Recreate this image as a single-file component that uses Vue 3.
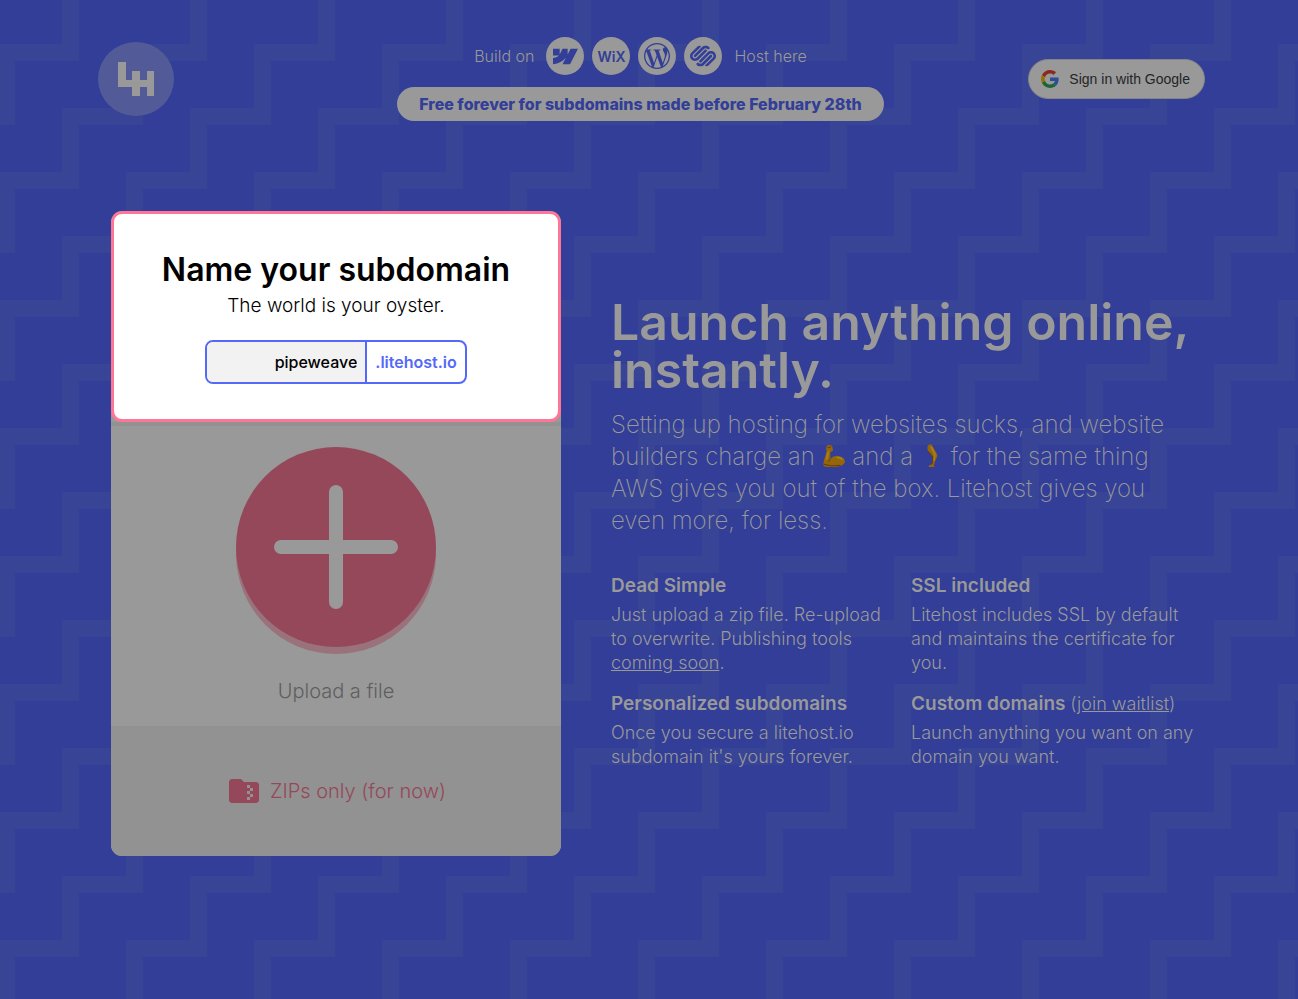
<script setup>
import { ref } from 'vue'

const subdomain = ref('pipeweave')

const builders = [
  {
    name: 'Webflow',
    size: 25,
    path: 'm24 4.515-7.658 14.97H9.149l3.205-6.204h-.144C9.566 16.713 5.621 18.973 0 19.485v-6.118s3.596-.213 5.71-2.435H0V4.515h6.417v5.278l.144-.001 2.622-5.277h4.854v5.244h.144l2.72-5.244H24Z',
  },
  { name: 'Wix', text: 'WiX' },
  {
    name: 'WordPress',
    size: 26,
    path: 'M21.469 6.825c.84 1.537 1.318 3.3 1.318 5.175 0 3.979-2.156 7.456-5.363 9.325l3.295-9.527c.615-1.54.82-2.771.82-3.864 0-.405-.026-.78-.07-1.11m-7.981.105c.647-.03 1.232-.105 1.232-.105.582-.075.514-.93-.067-.899 0 0-1.755.135-2.88.135-1.064 0-2.85-.15-2.85-.15-.585-.03-.661.855-.075.885 0 0 .54.061 1.125.09l1.68 4.605-2.37 7.08L5.354 6.9c.649-.03 1.234-.1 1.234-.1.585-.075.516-.93-.065-.896 0 0-1.746.138-2.874.138-.2 0-.438-.008-.69-.015C4.911 3.15 8.235 1.215 12 1.215c2.809 0 5.365 1.072 7.286 2.833-.046-.003-.091-.009-.141-.009-1.06 0-1.812.923-1.812 1.914 0 .89.513 1.643 1.06 2.531.411.72.89 1.643.89 2.977 0 .915-.354 1.994-.821 3.479l-1.075 3.585-3.9-11.61.001.014zM12 22.784c-1.059 0-2.081-.153-3.048-.437l3.237-9.406 3.315 9.087c.024.053.05.101.078.149-1.12.393-2.325.609-3.582.609M1.211 12c0-1.564.336-3.05.935-4.39L7.29 21.709C3.694 19.96 1.212 16.271 1.211 12M12 0C5.385 0 0 5.385 0 12s5.385 12 12 12 12-5.385 12-12S18.615 0 12 0',
  },
  {
    name: 'Squarespace',
    size: 26,
    path: 'M22.655 8.719c-1.802-1.801-4.726-1.801-6.564 0l-7.351 7.35c-.45.45-.45 1.2 0 1.65.45.449 1.2.449 1.65 0l7.351-7.351c.899-.899 2.362-.899 3.264 0 .9.9.9 2.364 0 3.264l-7.239 7.239c.9.899 2.362.899 3.263 0l5.589-5.589c1.836-1.838 1.836-4.763.037-6.563zm-2.475 2.437c-.451-.45-1.201-.45-1.65 0l-7.354 7.389c-.9.899-2.361.899-3.262 0-.45-.45-1.2-.45-1.65 0s-.45 1.2 0 1.649c1.801 1.801 4.726 1.801 6.564 0l7.351-7.35c.449-.487.449-1.239.001-1.688zm-2.439-7.35c-1.801-1.801-4.726-1.801-6.564 0l-7.351 7.351c-.45.449-.45 1.199 0 1.649s1.2.45 1.65 0l7.395-7.351c.9-.899 2.371-.899 3.27 0 .451.45 1.201.45 1.65 0 .421-.487.421-1.199-.05-1.649zm-2.475 2.475c-.45-.449-1.2-.449-1.65 0l-7.351 7.35c-.899.9-2.362.9-3.263 0-.9-.898-.9-2.361 0-3.262l7.239-7.239c-.9-.9-2.362-.9-3.263 0L1.39 8.719c-1.8 1.8-1.8 4.725 0 6.563 1.801 1.801 4.725 1.801 6.564 0l7.35-7.351c.412-.487.412-1.237-.038-1.65z',
  },
]
</script>

<template>
  <div class="page">
    <svg class="backdrop" aria-hidden="true">
      <defs>
        <pattern id="stairs" x="-2" y="44" width="128" height="128" patternUnits="userSpaceOnUse">
          <path d="M0 0H81V17H17V81H0ZM64 64H128V81H81V128H64Z" />
        </pattern>
      </defs>
      <rect width="100%" height="100%" fill="url(#stairs)" />
    </svg>

    <header class="header">
      <a class="logo" href="#" aria-label="Litehost">
        <svg width="76" height="74" viewBox="0 0 76 74">
          <ellipse cx="38" cy="37" rx="38" ry="37" fill="#525b98" />
          <path d="M20 20h8v18h6v-9h8v9h7v-9h7v25h-7v-9h-7v9h-8v-9H20z" fill="#999" />
        </svg>
      </a>

      <div class="pitch">
        <div class="builders">
          <span>Build on</span>
          <ul class="badges">
            <li v-for="b in builders" :key="b.name" class="badge" :aria-label="b.name">
              <svg v-if="b.path" :width="b.size" :height="b.size" viewBox="0 0 24 24"><path :d="b.path" /></svg>
              <span v-else>{{ b.text }}</span>
            </li>
          </ul>
          <span>Host here</span>
        </div>
        <p class="promo">Free forever for subdomains made before February 28th</p>
      </div>

      <button class="google" type="button">
        <svg width="18" height="18" viewBox="0 0 48 48" aria-hidden="true">
          <path fill="#8d2820" d="M24 9.5c3.54 0 6.71 1.22 9.21 3.6l6.85-6.85C35.9 2.38 30.47 0 24 0 14.62 0 6.51 5.38 2.56 13.22l7.98 6.19C12.43 13.72 17.74 9.5 24 9.5z" />
          <path fill="#285092" d="M46.98 24.55c0-1.57-.15-3.09-.38-4.55H24v9.02h12.94c-.58 2.96-2.26 5.48-4.78 7.18l7.73 6c4.51-4.18 7.09-10.36 7.09-17.65z" />
          <path fill="#977103" d="M10.53 28.59c-.48-1.45-.76-2.99-.76-4.59s.27-3.14.76-4.59l-7.98-6.19C.92 16.46 0 20.12 0 24c0 3.88.92 7.54 2.56 10.78l7.97-6.19z" />
          <path fill="#1f6532" d="M24 48c6.48 0 11.93-2.13 15.89-5.81l-7.73-6c-2.15 1.45-4.92 2.3-8.16 2.3-6.26 0-11.57-4.22-13.47-9.91l-7.98 6.19C6.51 42.62 14.62 48 24 48z" />
        </svg>
        <span>Sign in with Google</span>
      </button>
    </header>

    <main class="main">
      <section class="card">
        <form class="naming" @submit.prevent>
          <h2>Name your subdomain</h2>
          <label class="tagline" for="subdomain">The world is your oyster.</label>
          <div class="field">
            <input id="subdomain" v-model="subdomain" type="text" spellcheck="false" />
            <span class="suffix">.litehost.io</span>
          </div>
        </form>
        <div class="upload">
          <button id="upload" class="plus" type="button" aria-labelledby="upload-label">
            <svg width="124" height="124" viewBox="0 0 124 124" aria-hidden="true">
              <path d="M62 7v110M7 62h110" stroke="#999" stroke-width="14" stroke-linecap="round" />
            </svg>
          </button>
          <label id="upload-label" for="upload">Upload a file</label>
        </div>
        <footer class="formats">
          <svg width="36" height="36" viewBox="0 0 24 24" aria-hidden="true">
            <path d="M20 6h-8l-2-2H4c-1.1 0-2 .9-2 2v12c0 1.1.9 2 2 2h16c1.1 0 2-.9 2-2V8c0-1.1-.9-2-2-2zm-2 6h-2v2h2v2h-2v2h-2v-2h2v-2h-2v-2h2v-2h-2V8h2v2h2v2z" />
          </svg>
          <span>ZIPs only (for now)</span>
        </footer>
      </section>

      <section class="copy">
        <h1>Launch anything online, instantly.</h1>
        <p class="lead">
          Setting up hosting for websites sucks, and website builders charge an
          <svg class="emoji" width="24" height="24" viewBox="0 0 26 26" role="img" aria-label="arm">
            <path d="M5 2Q8 0 11 2L12 7 9 9 9 16Q13 12 18 13 24 14 25 19 24 23 19 24 10 26 2 24 1 22 2 18L5 8Q4 5 5 2Z" fill="#94660c" />
            <path d="M2 22Q10 25 20 23M9 16l-2 3M6 4l4-1" stroke="#633808" fill="none" />
            <path d="M7 8L5 17M16 15Q20 14 22 17" stroke="#a9801c" stroke-width="2" fill="none" />
          </svg>
          and a
          <svg class="emoji" width="24" height="24" viewBox="0 0 26 26" role="img" aria-label="leg">
            <path d="M9 1Q13-1 14 3L18 10Q20 13 17 17L15 23 16 25 9 25 10 23 13 22 14 14 9 8Q7 4 9 1Z" fill="#94660c" />
            <path d="M12 3L16 11 15 18" stroke="#a9801c" stroke-width="2" fill="none" />
            <path d="M9 8L14 14 13 22" stroke="#633808" fill="none" />
          </svg>
          for the same thing AWS gives you out of the box. Litehost gives you even more, for less.
        </p>
        <div class="features">
          <article>
            <h3>Dead Simple</h3>
            <p>Just upload a zip file. Re-upload to overwrite. Publishing tools <a href="#">coming soon</a>.</p>
          </article>
          <article>
            <h3>SSL included</h3>
            <p>Litehost includes SSL by default and maintains the certificate for you.</p>
          </article>
          <article>
            <h3>Personalized subdomains</h3>
            <p>Once you secure a litehost.io subdomain it's yours forever.</p>
          </article>
          <article>
            <h3>Custom domains <span>(<a href="#">join waitlist</a>)</span></h3>
            <p>Launch anything you want on any domain you want.</p>
          </article>
        </div>
      </section>
    </main>
  </div>
</template>

<style>
body {
  margin: 0;
  background: #323e97;
}
</style>

<style scoped>
.page {
  position: relative;
  box-sizing: border-box;
  min-height: 100vh;
  padding: 37px 0 80px;
  color: #999;
  font-family: Inter, "Open Sans", sans-serif;
  font-weight: 300;
}
.backdrop {
  position: absolute;
  inset: 0;
  width: 100%;
  height: 100%;
  fill: #384495;
}
h1, h2, h3, p, ul {
  margin: 0;
  padding: 0;
}
a {
  color: inherit;
}
.header {
  position: relative;
  display: grid;
  grid-template-columns: 1fr auto 1fr;
  align-items: center;
  padding: 0 93px 0 76px;
}
.logo {
  justify-self: start;
  margin-left: 22px;
}
.logo svg {
  display: block;
}
.pitch {
  display: flex;
  flex-direction: column;
  align-items: center;
  gap: 12px;
}
.builders {
  display: flex;
  align-items: center;
  gap: 12px;
  font-size: 16px;
}
.badges {
  display: flex;
  gap: 8px;
  list-style: none;
}
.badge {
  display: flex;
  align-items: center;
  justify-content: center;
  width: 38px;
  height: 38px;
  border-radius: 50%;
  background: #999;
  color: #323e97;
  fill: #323e97;
  font-size: 14px;
  font-weight: 600;
}
.promo {
  padding: 0 22px;
  border-radius: 17px;
  background: #999;
  color: #323e97;
  font-size: 16px;
  font-weight: 800;
  line-height: 34px;
  white-space: nowrap;
}
.google {
  justify-self: end;
  display: flex;
  align-items: center;
  gap: 10px;
  height: 40px;
  padding: 0 14px 0 12px;
  border: 1px solid #838485;
  border-radius: 20px;
  background: #999;
  color: #242526;
  font-family: "Liberation Sans", Arial, sans-serif;
  font-size: 14px;
  white-space: nowrap;
}
.main {
  position: relative;
  display: grid;
  grid-template-columns: 450px minmax(0, 600px);
  gap: 50px;
  align-items: center;
  justify-content: center;
  margin-top: 90px;
  padding-left: 24px;
}
.card {
  overflow: hidden;
  border-radius: 11px;
  background: #999;
}
.naming {
  display: flex;
  flex-direction: column;
  align-items: center;
  box-sizing: border-box;
  height: 211px;
  padding-top: 36px;
  border: 3px solid #ff7596;
  border-radius: 11px;
  background: #fff;
  color: #000;
}
.naming h2 {
  font-size: 32px;
  font-weight: 600;
  line-height: 40px;
}
.tagline {
  margin-bottom: 18px;
  font-size: 19px;
  line-height: 32px;
}
.field {
  display: flex;
  overflow: hidden;
  border: 2px solid #5468f9;
  border-radius: 8px;
  font-size: 16px;
  line-height: 40px;
}
.field input {
  box-sizing: border-box;
  width: 160px;
  height: 40px;
  padding: 0 8px;
  border: 0;
  border-right: 2px solid #5468f9;
  background: #f2f2f2;
  color: #000;
  font: inherit;
  font-weight: 500;
  text-align: right;
}
.suffix {
  padding: 0 8px;
  color: #5468f9;
  font-weight: 600;
}
.upload {
  display: flex;
  flex-direction: column;
  align-items: center;
  gap: 28px;
  padding: 21px 0 19px;
  border-top: 4px solid #929292;
  color: #5f5f5f;
  font-size: 20px;
  line-height: 32px;
}
.plus {
  display: flex;
  align-items: center;
  justify-content: center;
  width: 200px;
  height: 200px;
  border: 0;
  border-radius: 50%;
  background: #96485b;
  box-shadow: 0 7px #99727c;
}
.formats {
  display: flex;
  align-items: center;
  justify-content: center;
  gap: 8px;
  height: 130px;
  background: #929292;
  color: #96485b;
  fill: #96485b;
  font-size: 20px;
}
h1 {
  font-size: 50px;
  font-weight: 600;
  line-height: 48px;
}
.lead {
  max-width: 570px;
  margin: 15px 0 37px;
  font-size: 24px;
  font-weight: 200;
  line-height: 32px;
}
.emoji {
  vertical-align: -3px;
}
.features {
  display: grid;
  grid-template-columns: 1fr 1fr;
  row-gap: 17px;
  font-size: 18px;
  line-height: 24px;
}
.features article {
  padding-right: 16px;
}
.features h3 {
  margin-bottom: 5px;
  font-size: 19px;
  font-weight: 600;
  line-height: 24px;
}
.features h3 span {
  font-size: 18px;
  font-weight: 300;
}
</style>
